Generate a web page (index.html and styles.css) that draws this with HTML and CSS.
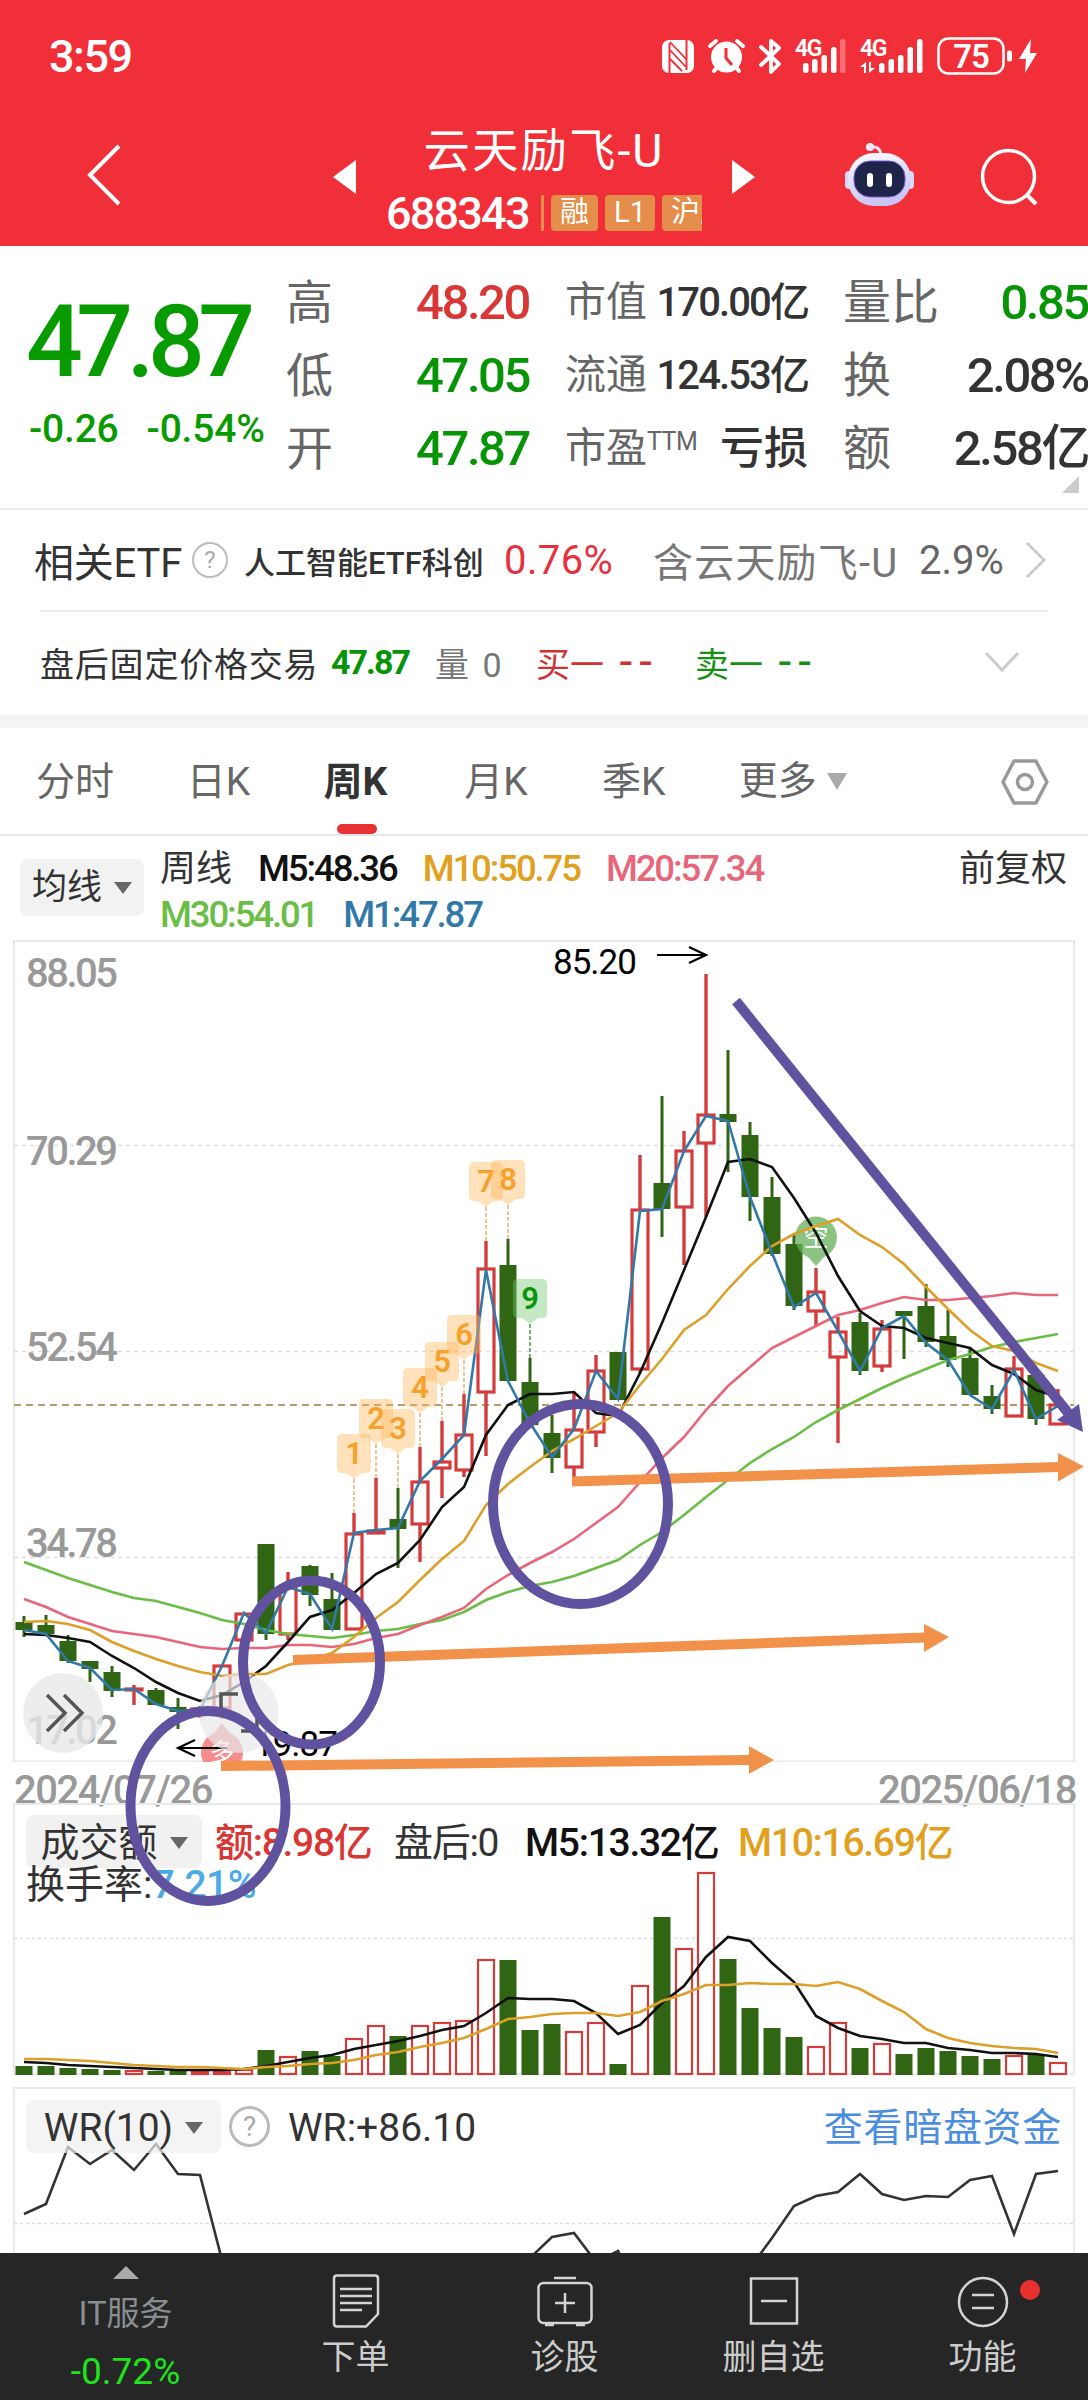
FILE: index.html
```html
<!DOCTYPE html>
<html lang="zh-CN">
<head>
    <meta charset="UTF-8">
    <meta name="viewport" content="width=device-width, initial-scale=1.0">
    <title>云天励飞-U 688343</title>
    <link rel="stylesheet" href="styles.css">
</head>
<body>
    <header class="header">
        <div class="status-bar">
            <span class="time">3:59</span>
            <svg class="status-icons" viewBox="655 35 385 42" width="385" height="42">
                <!-- NFC -->
                <rect x="662" y="40" width="32" height="33" rx="7" fill="#fff"/>
                <path d="M669.500 43v30M686.500 40v30" stroke="#f12f38" stroke-width="2"/>
                <path d="M670 42l16 17M670 50l16 17M670 59l12 12" stroke="#f12f38" stroke-width="1.800"/>
                <!-- 闹钟 -->
                <circle cx="726.500" cy="57" r="15.500" fill="#fff"/>
                <path d="M710 46l6-5M743 46l-6-5M714 71l4-5M739 71l-4-5" stroke="#fff" stroke-width="4" stroke-linecap="round"/>
                <path d="M726 48v10l6 7" fill="none" stroke="#f12f38" stroke-width="3"/>
                <!-- 蓝牙 -->
                <path d="M761 47l18 17-8 8V41l8 7-18 17" fill="none" stroke="#fff" stroke-width="3.800" stroke-linejoin="round" stroke-linecap="round"/>
                <g fill="#fff">
                    <text class="net" x="795" y="56">4G</text>
                    <rect x="803" y="63" width="5.500" height="10" rx="2.500"/>
                    <rect x="812" y="59" width="5.500" height="14" rx="2.500"/>
                    <rect x="821.500" y="55" width="5.500" height="18" rx="2.500"/>
                    <rect x="831" y="47" width="5.500" height="26" rx="2.500"/>
                    <rect x="840" y="39" width="5.500" height="34" rx="2.500" opacity=".3"/>
                    <text class="net" x="860" y="56">4G</text>
                    <path d="M860 67l6-5v11h-2v-6zM869 62h2v6h4l-6 5z"/>
                    <rect x="879" y="63" width="5.500" height="10" rx="2.500"/>
                    <rect x="888.500" y="59" width="5.500" height="14" rx="2.500"/>
                    <rect x="898" y="55" width="5.500" height="18" rx="2.500"/>
                    <rect x="907.500" y="47" width="5.500" height="26" rx="2.500"/>
                    <rect x="917" y="39" width="5.500" height="34" rx="2.500"/>
                    <rect x="1007" y="50.500" width="5" height="11" rx="2"/>
                    <path d="M1031 39l-12 20h7l-1 14 12-20h-7z"/>
                    <text class="batt" x="971" y="68" text-anchor="middle">75</text>
                </g>
                <rect x="938.500" y="38.500" width="65" height="35" rx="10" fill="none" stroke="#fff" stroke-width="2.500"/>
            </svg>
        </div>
        <div class="title-bar">
            <svg class="back" width="40" height="66" viewBox="0 0 40 66"><path d="M36 4L7 33l29 29" fill="none" stroke="#fff" stroke-width="4"/></svg>
            <i class="tri-left"></i>
            <div class="stock">
                <div class="stock-name">云天励飞-U</div>
                <div class="stock-code">
                    <b>688343</b>
                    <div class="tags"><span>融</span><span>L1</span><span>沪股</span></div>
                </div>
            </div>
            <i class="tri-right"></i>
            <svg class="robot" width="70" height="66" viewBox="843 142 70 66">
                <defs>
                    <linearGradient id="head" x1="0" y1="0" x2="0.300" y2="1">
                        <stop offset="0" stop-color="#fff"/>
                        <stop offset="1" stop-color="#c9c4f5"/>
                    </linearGradient>
                </defs>
                <path d="M868 147q11-2 12 8" fill="none" stroke="#e6e0f6" stroke-width="3"/>
                <circle cx="869" cy="147" r="4" fill="#eee8fa"/>
                <rect x="844" y="171" width="9" height="18" rx="4" fill="#dcd8fa"/>
                <rect x="904" y="171" width="9" height="18" rx="4" fill="#dcd8fa"/>
                <rect x="847" y="153" width="63" height="53" rx="26" fill="url(#head)"/>
                <rect x="853" y="161" width="51" height="36" rx="16" fill="#1e2447" stroke="#7a5bd8"/>
                <rect x="866" y="173" width="6" height="14" rx="3" fill="#fff"/>
                <rect x="885" y="173" width="6" height="14" rx="3" fill="#fff"/>
            </svg>
            <svg class="search" width="60" height="60" viewBox="0 0 60 60">
                <circle cx="28.500" cy="28.500" r="26" fill="none" stroke="#fff" stroke-width="3.500"/>
                <path d="M46 46l10 10" stroke="#fff" stroke-width="4"/>
            </svg>
        </div>
    </header>

    <section class="quote">
        <div class="price">
            <div class="now">47.87</div>
            <div class="change"><span>-0.26</span><span>-0.54%</span></div>
        </div>
        <dl class="col col-a">
            <div><dt>高</dt><dd class="red">48.20</dd></div>
            <div><dt>低</dt><dd class="green">47.05</dd></div>
            <div><dt>开</dt><dd class="green">47.87</dd></div>
        </dl>
        <dl class="col col-b">
            <div><dt>市值</dt><dd>170.00亿</dd></div>
            <div><dt>流通</dt><dd>124.53亿</dd></div>
            <div><dt>市盈<sup>TTM</sup></dt><dd class="loss">亏损</dd></div>
        </dl>
        <dl class="col col-c">
            <div><dt>量比</dt><dd class="green">0.85</dd></div>
            <div><dt>换</dt><dd>2.08%</dd></div>
            <div><dt>额</dt><dd>2.58亿</dd></div>
        </dl>
        <i class="corner"></i>
    </section>

    <section class="etf">
        <span class="etf-title">相关ETF</span>
        <span class="help">?</span>
        <span class="etf-name">人工智能ETF科创</span>
        <span class="etf-rate">0.76%</span>
        <span class="etf-hold">含云天励飞-U</span>
        <span class="etf-pct">2.9%</span>
        <svg class="arrow-r" width="22" height="38" viewBox="0 0 22 38"><path d="M2 2l17 17L2 36" fill="none" stroke="#ccc" stroke-width="3"/></svg>
    </section>
    <section class="after">
        <span class="after-title">盘后固定价格交易</span>
        <b class="green">47.87</b>
        <span class="after-vol">量 0</span>
        <span class="buy">买一 <em>--</em></span>
        <span class="sell">卖一 <em>--</em></span>
        <svg class="arrow-d" width="36" height="22" viewBox="0 0 36 22"><path d="M2 2l16 17L34 2" fill="none" stroke="#ccc" stroke-width="3"/></svg>
    </section>

    <nav class="tabs">
        <span>分时</span>
        <span>日K</span>
        <span class="active">周K</span>
        <span>月K</span>
        <span>季K</span>
        <span class="more">更多<i class="caret"></i></span>
        <svg class="setting" width="48" height="46" viewBox="0 0 48 46">
            <path d="M13 2h22l11 21-11 21H13L2 23z" fill="none" stroke="#999" stroke-width="3.500" stroke-linejoin="round"/>
            <circle cx="24" cy="23" r="7.500" fill="none" stroke="#999" stroke-width="3.500"/>
        </svg>
    </nav>

    <section class="legend">
        <span class="pill">均线<i class="caret"></i></span>
        <div class="ma">
            <div><span class="cycle">周线</span><span class="m5">M5:48.36</span><span class="m10">M10:50.75</span><span class="m20">M20:57.34</span></div>
            <div><span class="m30">M30:54.01</span><span class="m1">M1:47.87</span></div>
        </div>
        <span class="adjust">前复权</span>
    </section>

    <main class="charts">
        <svg id="kline" class="kline" width="1088" height="822" viewBox="0 940 1088 822"></svg>
        <div class="dates"><span>2024/07/26</span><span>2025/06/18</span></div>

        <section class="panel volume">
            <svg id="volume" width="1088" height="284" viewBox="0 1803 1088 284"></svg>
            <div class="panel-head">
                <span class="pill">成交额<i class="caret"></i></span>
                <span class="red v1">额:8.98亿</span>
                <span class="v2">盘后:0</span>
                <span class="m5 v3">M5:13.32亿</span>
                <span class="m10">M10:16.69亿</span>
            </div>
            <div class="turnover">换手率:<em>7.21%</em></div>
        </section>

        <section class="panel wr">
            <svg id="wr" width="1088" height="166" viewBox="0 2087 1088 166"></svg>
            <div class="panel-head">
                <span class="pill">WR(10)<i class="caret"></i></span>
                <span class="help">?</span>
                <span class="wr-value">WR:+86.10</span>
                <a class="fund">查看暗盘资金</a>
            </div>
        </section>

        <!-- 手绘标注 -->
        <svg class="marks" width="1088" height="980" viewBox="0 940 1088 980">
            <g fill="#e8e8e8" fill-opacity=".8">
                <circle cx="63" cy="1713" r="40"/>
                <circle cx="239" cy="1713" r="40" fill-opacity=".7"/>
            </g>
            <path d="M47 1695l18 18-18 18M64 1695l18 18-18 18" fill="none" stroke="#555" stroke-width="3.500"/>
            <path d="M238 1694h-17v14M257 1715v16h-16" fill="none" stroke="#555" stroke-width="3.500"/>
            <g stroke="#f1914a" stroke-width="10">
                <path d="M221 1766L750 1760M293 1660L925 1637.500M572 1481.500L1059 1467"/>
            </g>
            <path d="M749 1746l25 14-25 14zM924 1624l25 13-25 15zM1058 1453l26 13.500-26 15z" fill="#f1914a"/>
            <g fill="none" stroke="#60529f" stroke-width="10">
                <ellipse cx="208" cy="1806" rx="77.500" ry="95"/>
                <ellipse cx="311.500" cy="1662.500" rx="68.500" ry="82"/>
                <ellipse cx="580.500" cy="1504" rx="87.500" ry="100"/>
                <path d="M736 1001L1069 1414"/>
            </g>
            <path d="M1083 1432l-26-12 22-16z" fill="#60529f"/>
        </svg>
    </main>

    <footer class="toolbar">
        <div class="index">
            <i class="up"></i>
            <span>IT服务</span>
            <em>-0.72%</em>
        </div>
        <div class="tool">
            <svg width="56" height="54" viewBox="0 0 56 54"><path d="M9 1.500h38q3 0 3 3V40L38 52.500H9q-3 0-3-3v-45q0-3 3-3z"/><path d="M12 15h32M12 22h32M12 29h32M12 36h22"/></svg>
            <span>下单</span>
        </div>
        <div class="tool">
            <svg width="56" height="54" viewBox="0 0 56 54"><rect x="1.500" y="9" width="53" height="40" rx="5"/><path d="M17 4h22M28 19v20M18 29h20M8 51h9M39 51h9"/></svg>
            <span>诊股</span>
        </div>
        <div class="tool">
            <svg width="56" height="54" viewBox="0 0 56 54"><rect x="5" y="4.500" width="46" height="45"/><path d="M15 27h26"/></svg>
            <span>删自选</span>
        </div>
        <div class="tool">
            <svg width="56" height="54" viewBox="0 0 56 54"><circle cx="28" cy="28" r="24"/><path d="M17 21h22M17 34h22"/></svg>
            <span>功能</span>
            <i class="dot"></i>
        </div>
    </footer>
    <script src="script.js"></script>
</body>
</html>
```
FILE: styles.css
```css
body {
    margin: 0;
    width: 1088px;
    height: 2400px;
    overflow: hidden;
    background: #fff;
    color: #333;
    font-family: Roboto, "Noto Sans CJK SC", sans-serif;
    white-space: nowrap;
}

i, em {
    font-style: normal;
}

.red {
    color: #d93636;
}

.green {
    color: #079407;
}

/* 顶部 */
.header {
    height: 246px;
    background: #f12f38;
    color: #fff;
}

.status-bar {
    display: flex;
    justify-content: space-between;
    height: 112px;
    padding: 0 48px 0 49px;
}

.time {
    line-height: 114px;
    font-size: 45px;
    font-weight: 500;
    letter-spacing: -1.5px;
}

.status-icons {
    margin-top: 35px;
}

.net {
    font-size: 23px;
    font-weight: 600;
    letter-spacing: -1.5px;
}

.batt {
    font-size: 33px;
    font-weight: 600;
    letter-spacing: -1px;
}

.title-bar {
    display: flex;
    align-items: flex-start;
    height: 134px;
}

.back {
    margin: 30px 0 0 83px;
}

.tri-left, .tri-right {
    margin-top: 48px;
    border: 17px solid transparent;
}

.tri-left {
    margin-left: 210px;
    border-width: 17px 23px 17px 0;
    border-right-color: #fff;
}

.tri-right {
    border-width: 17px 0 17px 23px;
    border-left-color: #fff;
}

.stock {
    width: 376px;
}

.stock-name {
    margin-top: 9px;
    height: 60px;
    line-height: 60px;
    text-align: center;
    font-size: 46.5px;
    letter-spacing: 2px;
}

.stock-code {
    display: flex;
    align-items: center;
    height: 64px;
    padding-left: 30px;
}

.stock-code b {
    width: 155px;
    font-size: 45px;
    font-weight: 500;
    letter-spacing: -1.8px;
}

.tags {
    display: flex;
    flex: none;
    gap: 7px;
    width: 151px;
    height: 36px;
    border-left: 3px solid #e58d4a;
    padding-left: 7px;
    overflow: hidden;
}

.tags span {
    flex: none;
    padding: 0 9px;
    border-radius: 4px;
    background: #e58d4a;
    font-size: 29px;
    line-height: 34px;
}

.robot {
    margin: 30px 0 0 89px;
}

.search {
    margin: 36px 0 0 66px;
}

/* 行情 */
.quote {
    position: relative;
    display: flex;
    height: 264px;
    border-bottom: 2px solid #ececec;
    box-sizing: border-box;
}

.price {
    width: 288px;
    color: #079b00;
}

.now {
    margin: 44px 0 0 26px;
    line-height: 104px;
    font-size: 100px;
    font-weight: 500;
    letter-spacing: -6.5px;
}

.change {
    display: flex;
    gap: 28px;
    margin: 13px 0 0 29px;
    font-size: 39px;
    font-weight: 500;
    letter-spacing: -0.2px;
    line-height: 44px;
}

.col {
    margin: 20px 0 0;
    font-size: 49px;
}

.col div {
    display: flex;
    justify-content: space-between;
    align-items: center;
    height: 73px;
}

.col dt {
    color: #666;
    font-size: 47px;
    font-weight: 400;
    line-height: 73px;
}

.col dd {
    margin: 0;
    font-weight: 500;
    line-height: 73px;
    letter-spacing: -2.4px;
}

.col-a {
    width: 241px;
}

.col-a dt {
    margin-left: -2px;
}

.col-b {
    width: 243px;
    margin-left: 36px;
}

.col-b dt {
    font-size: 41px;
}

.col-b dd {
    font-size: 40px;
    line-height: 70px;
    letter-spacing: -1.9px;
}

.col-b .loss {
    font-size: 44px;
    letter-spacing: 0;
}

.col sup {
    font-size: 25px;
    vertical-align: 12px;
    line-height: 0;
    letter-spacing: -0.5px;
}

.col-c {
    width: 245px;
    margin-left: 35px;
}

.col-c dt {
    font-size: 48px;
}

.corner {
    position: absolute;
    right: 9px;
    bottom: 15px;
    border-left: 17px solid transparent;
    border-bottom: 17px solid #ccc;
}

/* ETF */
.etf {
    display: flex;
    align-items: center;
    height: 100px;
    padding: 0 41px 0 34px;
    font-size: 40px;
}

.help {
    width: 32px;
    height: 32px;
    border: 2px solid #bbb;
    border-radius: 50%;
    color: #aaa;
    font-size: 24px;
    line-height: 32px;
    text-align: center;
}

.etf-title {
    width: 158px;
    letter-spacing: -0.2px;
}

.etf-name {
    width: 245px;
    margin-left: 16px;
    font-size: 31px;
    font-weight: 500;
}

.etf-rate {
    width: 149px;
    margin-left: 15px;
    color: #e5303f;
    letter-spacing: 0.4px;
}

.etf-hold {
    width: 266px;
    color: #777;
    letter-spacing: 1.2px;
}

.etf-pct {
    color: #666;
}

.arrow-r {
    margin-left: auto;
}

.after {
    display: flex;
    align-items: center;
    height: 100px;
    padding-bottom: 4px;
    margin: 0 40px;
    border-top: 2px solid #ececec;
    font-size: 34px;
}

.after-title {
    width: 291px;
    letter-spacing: 0.8px;
}

.after b {
    width: 104px;
    letter-spacing: -2px;
}

.after-vol {
    width: 101px;
    color: #777;
    word-spacing: 5px;
}

.buy {
    width: 159px;
    color: #cc3434;
    word-spacing: 7px;
}

.sell {
    color: #159015;
    word-spacing: 7px;
}

.after em {
    font-size: 46px;
    line-height: 30px;
    letter-spacing: 7px;
}

.arrow-d {
    margin-left: auto;
    margin-right: 28px;
}

/* 周期切换 */
.tabs {
    display: flex;
    position: relative;
    height: 106px;
    border-top: 13px solid #f4f4f4;
    border-bottom: 2px solid #e8e8e8;
    padding: 0 39px 0 36px;
    margin-top: -1px;
    line-height: 109px;
    font-size: 39px;
    color: #666;
}

.tabs span {
    width: 137px;
}

.tabs span:nth-child(1) {
    width: 151px;
}

.tabs .active {
    position: relative;
    font-weight: 700;
    color: #333;
}

.tabs span:nth-child(4) {
    width: 138px;
    margin-left: 4px;
}

.tabs .more {
    width: 263px;
    display: flex;
    align-items: center;
}

.active::after {
    content: "";
    position: absolute;
    left: 14px;
    bottom: 0;
    width: 40px;
    height: 10px;
    border-radius: 5px;
    background: #e73132;
}

.caret {
    display: inline-block;
    margin-left: 12px;
    border: 9px solid transparent;
    border-top: 12px solid #666;
    border-bottom: 0;
}

.tabs .caret {
    border-width: 17px 10px 0;
    border-top-color: #aaa;
    margin-left: 10px;
}

.setting {
    margin-top: 31px;
}

.legend {
    display: flex;
    height: 104px;
    font-size: 36.5px;
}

.pill {
    display: flex;
    align-items: center;
    justify-content: center;
    background: #f2f2f2;
    border-radius: 8px;
}

.legend .pill {
    width: 124px;
    height: 57px;
    line-height: 54px;
    margin: 23px 0 0 20px;
    font-size: 35px;
}

.ma {
    width: 799px;
    margin: 10px 0 0 16px;
    font-weight: 500;
    letter-spacing: -2.1px;
}

.ma div {
    display: flex;
    gap: 26px;
    height: 46px;
    line-height: 46px;
}

.cycle {
    font-size: 36px;
    font-weight: 400;
    letter-spacing: 0;
}

.adjust {
    margin-top: 11px;
    line-height: 44px;
    font-size: 36px;
}

.m5 { color: #111; }
.m10 { color: #e2a01f; }
.m20 { color: #e8667a; }
.m30 { color: #6abd45; }
.m1 { color: #3278a8; }

/* 图表 */
.charts {
    position: relative;
    height: 1313px;
}

.charts svg {
    display: block;
}

.dates {
    display: flex;
    justify-content: space-between;
    height: 41px;
    padding: 0 12px 0 14px;
    font-size: 40px;
    font-weight: 500;
    line-height: 58px;
    letter-spacing: -1.5px;
    color: #999;
}

.axis {
    font-size: 40px;
    font-weight: 500;
    letter-spacing: -2.5px;
    fill: #999;
}

.peak {
    font-size: 35px;
    letter-spacing: -1px;
}

.nine {
    font-size: 31px;
    font-weight: 600;
    text-anchor: middle;
}

.badge {
    font-size: 25px;
    text-anchor: middle;
    fill: #fff;
}

.panel {
    position: relative;
    height: 284px;
    font-size: 39px;
}

.panel > svg {
    position: absolute;
    left: 0;
    top: 0;
}

.panel-head {
    position: relative;
    display: flex;
    align-items: center;
    height: 53px;
    line-height: 50px;
    padding: 12px 26px 0 26px;
    font-weight: 500;
    letter-spacing: -1.3px;
}

.panel-head > span, .panel-head > a {
    padding-top: 3px;
}

.panel .pill {
    width: 176px;
    height: 50px;
    font-weight: 400;
    letter-spacing: 0;
    background: rgba(240, 240, 240, 0.9);
}

.v1 {
    width: 165px;
    margin-left: 13px;
}

.v1, .v2, .v3 {
    margin-right: 14px;
}

.v2 {
    width: 117px;
    font-weight: 400;
}

.v3 {
    width: 199px;
}

.turnover {
    position: relative;
    margin: -5px 0 0 26px;
    line-height: 45px;
}

.turnover em {
    color: #4aaae5;
    font-weight: 500;
    letter-spacing: -0.5px;
}

.wr {
    height: 166px;
}

.wr .panel-head {
    padding-top: 13px;
    font-weight: 400;
    letter-spacing: 0;
}

.wr .pill {
    width: 195px;
    background: rgba(240, 240, 240, 0.7);
}

.wr .help {
    width: 35px;
    height: 35px;
    margin-left: 8px;
    padding: 0;
    font-size: 28px;
    line-height: 36px;
    border-width: 3px;
}

.wr-value {
    margin-left: 18px;
}

.fund {
    margin-left: auto;
    color: #4b8ede;
    letter-spacing: 0.7px;
}

.marks {
    position: absolute;
    left: 0;
    top: 0;
}

/* 底部 */
.toolbar {
    position: relative;
    display: flex;
    height: 147px;
    background: #262626;
    color: #ccc;
    font-size: 34px;
}

.index {
    width: 251px;
    display: flex;
    flex-direction: column;
    align-items: center;
    color: #888e92;
}

.up {
    margin: 13px 0 9px;
    border: 13px solid transparent;
    border-top: 0;
    border-bottom-color: #aaa;
}

.index span {
    line-height: 52px;
    font-size: 33px;
}

.index em {
    margin-top: 7px;
    line-height: 50px;
    font-size: 37px;
    color: #1fe21f;
    letter-spacing: 0;
}

.tool {
    position: relative;
    width: 209px;
    display: flex;
    flex-direction: column;
    align-items: center;
}

.tool svg {
    margin-top: 21px;
    fill: none;
    stroke: #d4d4d4;
    stroke-width: 2.5;
}

.tool span {
    margin-top: 4px;
    line-height: 50px;
}

.dot {
    position: absolute;
    right: 47px;
    top: 27px;
    width: 20px;
    height: 20px;
    border-radius: 50%;
    background: #e73131;
}
```
FILE: script.js
```javascript
// 周K数据: [涨跌, 最高, 实体上沿, 实体下沿, 最低]
const candles = [
    ['g', 1616, 1622, 1630, 1637], ['g', 1615, 1625, 1634, 1635], ['g', 1635, 1641, 1661, 1663],
    ['g', 1661, 1661, 1669, 1682], ['g', 1666, 1672, 1691, 1697], ['r', 1685, 1689, 1690, 1705],
    ['g', 1688, 1690, 1705, 1705], ['g', 1698, 1707, 1712, 1729], ['r', 1706, 1709, 1711, 1718],
    ['r', 1666, 1666, 1708, 1719], ['r', 1613, 1614, 1640, 1640], ['g', 1544, 1544, 1634, 1640],
    ['r', 1572, 1587, 1634, 1640], ['g', 1565, 1566, 1595, 1606], ['g', 1573, 1599, 1630, 1630],
    ['r', 1513, 1534, 1629, 1629], ['r', 1478, 1531, 1533, 1533], ['g', 1488, 1519, 1529, 1568],
    ['r', 1447, 1482, 1524, 1562], ['r', 1421, 1462, 1468, 1498], ['r', 1394, 1435, 1470, 1477],
    ['r', 1241, 1269, 1392, 1456], ['g', 1239, 1265, 1381, 1381], ['g', 1358, 1382, 1425, 1425],
    ['g', 1415, 1433, 1458, 1473], ['r', 1393, 1430, 1467, 1478], ['r', 1355, 1371, 1432, 1447],
    ['g', 1352, 1352, 1400, 1400], ['r', 1155, 1210, 1369, 1373], ['g', 1096, 1183, 1209, 1237],
    ['r', 1131, 1151, 1207, 1265], ['r', 974, 1115, 1143, 1217], ['g', 1050, 1114, 1122, 1172],
    ['g', 1122, 1135, 1197, 1221], ['g', 1177, 1197, 1254, 1256], ['g', 1235, 1244, 1306, 1310],
    ['r', 1268, 1292, 1311, 1327], ['r', 1317, 1332, 1357, 1443], ['g', 1313, 1322, 1371, 1375],
    ['r', 1320, 1329, 1366, 1372], ['g', 1311, 1311, 1316, 1359], ['g', 1284, 1306, 1342, 1347],
    ['g', 1310, 1336, 1360, 1367], ['g', 1349, 1358, 1395, 1395], ['g', 1385, 1396, 1409, 1414],
    ['r', 1356, 1369, 1416, 1416], ['g', 1375, 1375, 1419, 1425], ['r', 1389, 1405, 1424, 1424]
];

// 均线
const lines = {
    '#6abd45': [1562, 1570, 1578, 1585, 1592, 1598, 1601, 1607, 1613, 1620, 1624, 1630, 1634, 1636, 1638, 1635, 1631, 1629, 1624, 1620, 1612, 1600, 1592, 1586, 1582, 1576, 1568, 1560, 1545, 1532, 1515, 1497, 1480, 1463, 1449, 1437, 1422, 1410, 1399, 1388, 1378, 1369, 1360, 1354, 1347, 1342, 1338, 1334],
    '#e8667a': [1599, 1607, 1617, 1624, 1631, 1634, 1637, 1642, 1647, 1649, 1648, 1648, 1645, 1645, 1647, 1644, 1638, 1634, 1625, 1617, 1608, 1589, 1575, 1563, 1552, 1539, 1523, 1507, 1482, 1458, 1437, 1410, 1386, 1367, 1348, 1337, 1326, 1315, 1310, 1303, 1297, 1300, 1300, 1298, 1296, 1293, 1295, 1295],
    '#111': [1634, 1635, 1638, 1642, 1656, 1668, 1682, 1693, 1701, 1695, 1682, 1666, 1642, 1617, 1610, 1593, 1574, 1563, 1540, 1507, 1487, 1435, 1405, 1394, 1394, 1392, 1413, 1416, 1373, 1323, 1270, 1217, 1162, 1159, 1167, 1198, 1233, 1276, 1311, 1326, 1328, 1338, 1343, 1348, 1365, 1374, 1390, 1397],
    '#dca02a': [1622, 1621, 1624, 1630, 1642, 1651, 1659, 1666, 1672, 1676, 1674, 1674, 1665, 1660, 1653, 1637, 1618, 1602, 1580, 1559, 1541, 1505, 1484, 1467, 1451, 1439, 1426, 1413, 1385, 1359, 1330, 1315, 1289, 1266, 1246, 1234, 1226, 1219, 1235, 1247, 1264, 1287, 1309, 1330, 1346, 1351, 1363, 1371],
    '#3278a8': [1630, 1634, 1661, 1668, 1690, 1689, 1704, 1711, 1710, 1666, 1613, 1633, 1587, 1594, 1629, 1533, 1530, 1528, 1481, 1459, 1435, 1270, 1381, 1423, 1457, 1429, 1371, 1399, 1211, 1209, 1151, 1116, 1121, 1197, 1253, 1307, 1293, 1331, 1371, 1328, 1316, 1343, 1360, 1395, 1409, 1370, 1419, 1406]
};

// 成交额
const volumes = [2066, 2066, 2068, 2069, 2070, 2071, 2071, 2071, 2072, 2072, 2070, 2050, 2057, 2051, 2056, 2039, 2026, 2036, 2026, 2023, 2021, 1960, 1960, 2030, 2024, 2032, 2023, 2064, 1986, 1917, 1949, 1873, 1959, 2008, 2028, 2037, 2047, 2023, 2048, 2044, 2054, 2048, 2051, 2056, 2059, 2056, 2054, 2063];
const volumeLines = {
    '#111': [2062, 2063, 2065, 2066, 2067, 2068, 2069, 2070, 2070, 2070, 2069, 2066, 2062, 2058, 2055, 2049, 2045, 2041, 2036, 2030, 2026, 2013, 1998, 1999, 1999, 2001, 2013, 2034, 2025, 2003, 1986, 1957, 1937, 1941, 1963, 1982, 2016, 2028, 2036, 2039, 2043, 2043, 2048, 2050, 2053, 2053, 2054, 2057],
    '#dca02a': [2059, 2059, 2060, 2061, 2063, 2065, 2066, 2067, 2067, 2068, 2069, 2067, 2066, 2064, 2063, 2060, 2055, 2052, 2047, 2043, 2038, 2029, 2019, 2017, 2014, 2013, 2013, 2016, 2012, 2001, 1994, 1985, 1985, 1983, 1984, 1984, 1986, 1982, 1989, 2001, 2012, 2029, 2038, 2043, 2046, 2048, 2049, 2053]
};

const wrLine = [2214, 2204, 2147, 2164, 2150, 2170, 2144, 2174, 2175, 2260, 2300, 2300, 2300, 2300, 2300, 2300, 2300, 2300, 2300, 2300, 2300, 2300, 2290, 2258, 2237, 2233, 2262, 2251, 2290, 2300, 2300, 2300, 2290, 2268, 2238, 2206, 2196, 2192, 2174, 2194, 2200, 2196, 2197, 2180, 2176, 2234, 2174, 2171];

// 九转: [序号, K线下标]
const nineTurns = [[1, 15], [2, 16], [3, 17], [4, 18], [5, 19], [6, 20], [7, 21], [8, 22], [9, 23]];

const RED = '#d43c3c';
const GREEN = '#2f6513';
const px = i => 24 + i * 22;

function polyline(ys, color, width) {
    const points = ys.map((y, i) => `${px(i)},${y}`).join(' ');
    return `<polyline points="${points}" fill="none" stroke="${color}" stroke-width="${width}"/>`;
}

function dashed(y, color, width, dash) {
    return `<path d="M14 ${y}H1074" stroke="${color}" stroke-width="${width}" stroke-dasharray="${dash}"/>`;
}

function drawKline() {
    let html = '<rect x="14" y="941" width="1060" height="820.500" fill="none" stroke="#e9e9e9" stroke-width="2"/>';
    [1145.5, 1351.5, 1557.5].forEach(y => html += dashed(y, '#ddd', 1.5, '4 4'));
    html += dashed(1405, '#b89a68', 2, '7 5');

    candles.forEach(([type, high, top, bottom, low], i) => {
        const x = px(i);
        if (type === 'g') {
            html += `<path d="M${x} ${high}V${low}" stroke="${GREEN}" stroke-width="3"/>`;
            html += `<rect x="${x - 8.5}" y="${top}" width="17" height="${bottom - top}" fill="${GREEN}"/>`;
        } else {
            html += `<path d="M${x} ${high}V${top}M${x} ${bottom}V${low}" stroke="${RED}" stroke-width="3.4"/>`;
            html += `<rect x="${x - 8}" y="${top}" width="16" height="${bottom - top}" fill="none" stroke="${RED}" stroke-width="3.2"/>`;
        }
    });

    // 多空信号
    html += '<path d="M214 1733l8-10 8 10a21 21 0 1 1-16 0z" fill="#f47878" fill-opacity=".85"/><text class="badge" x="222" y="1761">多</text>';
    html += '<path d="M808 1257l8 9 8-9a21 21 0 1 0-16 0z" fill="#64b058" fill-opacity=".75"/><text class="badge" x="816" y="1246">空</text>';

    [['88.05', 987], ['70.29', 1165], ['52.54', 1361], ['34.78', 1557], ['17.02', 1744]].forEach(([t, y]) => {
        html += `<text class="axis" x="26" y="${y}">${t}</text>`;
    });
    for (const color in lines) html += polyline(lines[color], color, 2.6);

    nineTurns.forEach(([n, i]) => {
        const x = px(i), high = candles[i][1], top = high - 79;
        const bg = n === 9 ? '#6fc76f' : '#ffb85c';
        const fg = n === 9 ? '#0a960a' : '#f5a22c';
        html += `<path d="M${x} ${high}V${high - 34}" stroke="${n === 9 ? '#6db56d' : '#e5c89a'}" stroke-width="2" stroke-dasharray="4 2"/>`;
        html += `<path d="M${x - 12} ${top}h24q5 0 5 5v29q0 5-5 5h-4l-8 6-8-6h-4q-5 0-5-5v-29q0-5 5-5z" fill="${bg}" fill-opacity=".42"/>`;
        html += `<text class="nine" x="${x}" y="${top + 30}" fill="${fg}">${n}</text>`;
    });

    html += '<text class="peak" x="553" y="974">85.20</text><path d="M657 955h48M689 947l17 8-17 8" fill="none" stroke="#000" stroke-width="2.200"/>';
    html += '<text class="peak" x="254" y="1756">19.87</text><path d="M227 1748h-48M195 1740l-17 8 17 8" fill="none" stroke="#000" stroke-width="2.200"/>';
    document.getElementById('kline').innerHTML = html;
}

function drawVolume() {
    let html = '<rect x="14" y="1804" width="1060" height="270" fill="none" stroke="#e9e9e9" stroke-width="2"/>';
    html += dashed(1938.5, '#ddd', 1.5, '3 3');
    volumes.forEach((top, i) => {
        const x = px(i);
        if (candles[i][0] === 'g') {
            html += `<rect x="${x - 8.5}" y="${top}" width="17" height="${2075 - top}" fill="${GREEN}"/>`;
        } else {
            html += `<rect x="${x - 8}" y="${top}" width="16" height="${2074 - top}" fill="#fff" stroke="${RED}" stroke-width="2.2"/>`;
        }
    });
    for (const color in volumeLines) html += polyline(volumeLines[color], color, 2.6);
    document.getElementById('volume').innerHTML = html;
}

function drawWr() {
    let html = '<rect x="14" y="2088" width="1060" height="300" fill="none" stroke="#e9e9e9" stroke-width="2"/>';
    html += dashed(2223.5, '#ddd', 1.5, '3 3');
    html += polyline(wrLine, '#333', 2.6);
    document.getElementById('wr').innerHTML = html;
}

drawKline();
drawVolume();
drawWr();
```
